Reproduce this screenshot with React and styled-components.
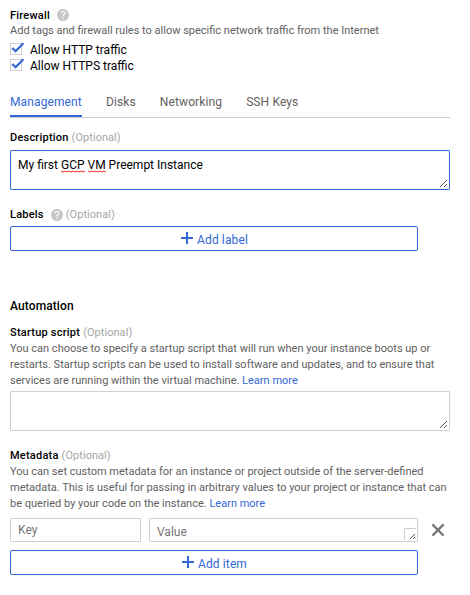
import React from "react";
import styled, { createGlobalStyle } from "styled-components";

const BLUE = "#3367d6";

const GlobalStyle = createGlobalStyle`
  * { box-sizing: border-box; }
  body {
    margin: 0;
    background: #fff;
    color: #000;
    font: 400 12px/16px Roboto, sans-serif;
  }
`;

const Page = styled.main`
  display: flex;
  flex-direction: column;
  width: 470px;
  height: 595px;
  padding: 8px 20px 0 10px;
`;

const Section = styled.section`
  display: flex;
  flex-direction: column;
  margin-top: ${(p) => p.$gap || 0}px;
`;

const FieldHeader = styled.div`
  display: flex;
  align-items: center;
  height: ${(p) => p.$height || 16}px;
  font-size: 11px;
`;

const FieldName = styled.span`
  font-weight: 500;
  letter-spacing: 0.22px;
`;

const Optional = styled.span`
  margin-left: 3px;
  color: #a6a6a6;
  letter-spacing: 0.05px;
`;

const HelpSvg = styled.svg`
  width: 12px;
  height: 12px;
  margin: -1px 0 0 7px;
  fill: #c6c6c6;
`;

const Hint = styled.p`
  margin: 0;
  color: #616161;
  font-size: 11px;
  line-height: 16px;
  white-space: nowrap;
`;

const Link = styled.a`
  color: ${BLUE};
  text-decoration: none;
`;

const CheckRow = styled.label`
  display: flex;
  align-items: center;
  gap: 6px;
  height: 16px;
`;

const CheckSvg = styled.svg`
  width: 14px;
  height: 14px;
  margin-top: -2px;
  overflow: visible;
`;

const Tabs = styled.nav`
  display: flex;
  gap: 24px;
  height: 24px;
  margin-top: 20px;
  border-bottom: 1px solid #d0d0d0;
  letter-spacing: 0.12px;
`;

const Tab = styled.a`
  height: 23px;
  color: ${(p) => (p.$active ? BLUE : "#616161")};
  border-bottom: 2px solid ${(p) => (p.$active ? BLUE : "transparent")};
`;

const TextBox = styled.div`
  position: relative;
  width: ${(p) => p.$width || 440}px;
  height: ${(p) => p.$height || 40}px;
  padding: ${(p) => p.$pad || 6}px 7px 0;
  border: 1px solid ${(p) => (p.$focused ? BLUE : "#d0d0d0")};
  border-radius: 1px;
  color: ${(p) => (p.$placeholder ? "#757575" : "#000")};
`;

const Word = styled.span`
  position: relative;
`;

const SquiggleSvg = styled.svg`
  position: absolute;
  left: 0;
  bottom: -1px;
  width: 100%;
  height: 3px;
  fill: none;
  stroke: #f22;
`;

const GripSvg = styled.svg`
  position: absolute;
  right: ${(p) => (p.$framed ? 1 : 2)}px;
  bottom: ${(p) => (p.$framed ? 1 : 2)}px;
  width: ${(p) => (p.$framed ? 12 : 7)}px;
  height: ${(p) => (p.$framed ? 12 : 7)}px;
`;

const AddButton = styled.button`
  display: flex;
  align-items: center;
  justify-content: center;
  gap: 4px;
  width: 408px;
  height: 25px;
  padding: 2px 0 0 1px;
  background: #fff;
  border: 1px solid ${BLUE};
  border-radius: 2px;
  color: ${BLUE};
  font: inherit;
  line-height: 16px;
  letter-spacing: 0.12px;
`;

const PlusSvg = styled.svg`
  width: 12px;
  height: 12px;
  margin-top: -4px;
  fill: ${BLUE};
`;

const GroupTitle = styled.h2`
  margin: 47px 0 0;
  font-size: 12px;
  line-height: 16px;
  font-weight: 500;
  letter-spacing: 0.1px;
`;

const MetadataRow = styled.div`
  display: flex;
  align-items: center;
  gap: 8px;
  margin: 6px 0 8px;
`;

const RemoveSvg = styled.svg`
  width: 12px;
  height: 12px;
  margin-left: 6px;
  overflow: visible;
  stroke: #757575;
  stroke-width: 2.2;
`;

const HelpIcon = () => (
  <HelpSvg viewBox="2 2 20 20">
    <path d="M12 2C6.48 2 2 6.48 2 12s4.48 10 10 10 10-4.48 10-10S17.52 2 12 2zm1 17h-2v-2h2v2zm2.07-7.75l-.9.92C13.45 12.9 13 13.5 13 15h-2v-.5c0-1.1.45-2.1 1.17-2.83l1.24-1.26c.37-.36.59-.86.59-1.41 0-1.1-.9-2-2-2s-2 .9-2 2H8c0-2.21 1.79-4 4-4s4 1.79 4 4c0 .88-.36 1.68-.93 2.25z" />
  </HelpSvg>
);

const Check = ({ children }) => (
  <CheckRow>
    <CheckSvg viewBox="0 0 14 14">
      <rect x="0.5" y="1.5" width="11" height="11" fill="#fff" stroke="#d0d0d0" />
      <path d="M2.2 6 L5.6 9.3 L13.4 1.2" fill="none" stroke={BLUE} strokeWidth="2.2" />
    </CheckSvg>
    {children}
  </CheckRow>
);

const SQUIGGLE = "M0 1" + "l2 1l2 -1".repeat(12);

const Misspelled = ({ children }) => (
  <Word>
    {children}
    <SquiggleSvg>
      <path d={SQUIGGLE} />
    </SquiggleSvg>
  </Word>
);

const Grip = () => (
  <GripSvg viewBox="0 0 7 7" shapeRendering="crispEdges" fill="#555">
    {[0, 1, 2, 3, 4, 5, 6].map((n) => (
      <rect key={n} x={n} y={6 - n} width="1" height="1" />
    ))}
    {[4, 5, 6].map((n) => (
      <rect key={n} x={n} y={10 - n} width="1" height="1" />
    ))}
  </GripSvg>
);

const FramedGrip = () => (
  <GripSvg $framed viewBox="0 0 12 12" shapeRendering="crispEdges" fill="#555">
    <path d="M0 0H12V1H1V12H0Z" fill="#d0d0d0" />
    {[6, 7, 8, 9, 10].map((n) => (
      <rect key={n} x={n} y={16 - n} width="1" height="1" />
    ))}
    {[9, 10].map((n) => (
      <rect key={n} x={n} y={19 - n} width="1" height="1" />
    ))}
  </GripSvg>
);

const Add = ({ children }) => (
  <AddButton type="button">
    <PlusSvg viewBox="0 0 12 12" shapeRendering="crispEdges">
      <path d="M5 0H7V5H12V7H7V12H5V7H0V5H5Z" />
    </PlusSvg>
    {children}
  </AddButton>
);

const TABS = ["Management", "Disks", "Networking", "SSH Keys"];

export default function App() {
  return (
    <>
      <GlobalStyle />
      <Page>
        <Section>
          <FieldHeader $height={15}>
            <FieldName>Firewall</FieldName>
            <HelpIcon />
          </FieldHeader>
          <Hint>Add tags and firewall rules to allow specific network traffic from the Internet</Hint>
        </Section>
        <Section $gap={3}>
          <Check>Allow HTTP traffic</Check>
          <Check>Allow HTTPS traffic</Check>
        </Section>
        <Tabs>
          {TABS.map((name, i) => (
            <Tab key={name} $active={i === 0}>{name}</Tab>
          ))}
        </Tabs>
        <Section $gap={12}>
          <FieldHeader>
            <FieldName>Description</FieldName>
            <Optional>(Optional)</Optional>
          </FieldHeader>
        </Section>
        <Section $gap={4}>
          <TextBox $focused>
            My first <Misspelled>GCP</Misspelled> <Misspelled>VM</Misspelled> Preempt Instance
            <Grip />
          </TextBox>
        </Section>
        <Section $gap={17}>
          <FieldHeader>
            <FieldName>Labels</FieldName>
            <HelpIcon />
            <Optional>(Optional)</Optional>
          </FieldHeader>
        </Section>
        <Section $gap={3}>
          <Add>Add label</Add>
        </Section>
        <GroupTitle>Automation</GroupTitle>
        <Section $gap={11}>
          <FieldHeader>
            <FieldName>Startup script</FieldName>
            <Optional>(Optional)</Optional>
          </FieldHeader>
          <Hint>
            You can choose to specify a startup script that will run when your instance boots up or<br />
            restarts. Startup scripts can be used to install software and updates, and to ensure that<br />
            services are running within the virtual machine. <Link>Learn more</Link>
          </Hint>
        </Section>
        <Section $gap={2}>
          <TextBox><Grip /></TextBox>
        </Section>
        <Section $gap={17}>
          <FieldHeader>
            <FieldName>Metadata</FieldName>
            <Optional>(Optional)</Optional>
          </FieldHeader>
          <Hint>
            You can set custom metadata for an instance or project outside of the server-defined<br />
            metadata. This is useful for passing in arbitrary values to your project or instance that can<br />
            be queried by your code on the instance. <Link>Learn more</Link>
          </Hint>
          <MetadataRow>
            <TextBox $width={131} $height={24} $pad={3} $placeholder>Key</TextBox>
            <TextBox $width={269} $height={24} $pad={5} $placeholder>
              Value
              <FramedGrip />
            </TextBox>
            <RemoveSvg viewBox="0 0 12 12">
              <path d="M0.4 0.4L11.6 11.6M11.6 0.4L0.4 11.6" />
            </RemoveSvg>
          </MetadataRow>
          <Add>Add item</Add>
        </Section>
      </Page>
    </>
  );
}
